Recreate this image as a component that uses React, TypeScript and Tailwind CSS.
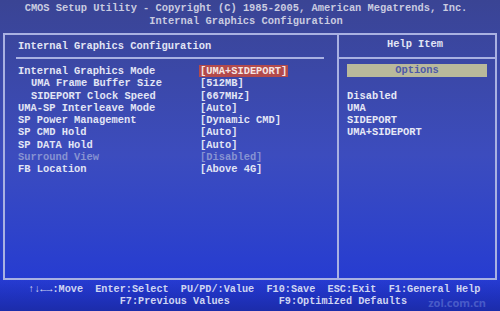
const FONT = { fontFamily: '"Liberation Mono", "DejaVu Sans Mono", monospace' };

type Row = { label: string; value: string; indent?: boolean; disabled?: boolean; selected?: boolean };

const rows: Row[] = [
  { label: 'Internal Graphics Mode', value: '[UMA+SIDEPORT]', selected: true },
  { label: 'UMA Frame Buffer Size', value: '[512MB]', indent: true },
  { label: 'SIDEPORT Clock Speed', value: '[667MHz]', indent: true },
  { label: 'UMA-SP Interleave Mode', value: '[Auto]' },
  { label: 'SP Power Management', value: '[Dynamic CMD]' },
  { label: 'SP CMD Hold', value: '[Auto]' },
  { label: 'SP DATA Hold', value: '[Auto]' },
  { label: 'Surround View', value: '[Disabled]', disabled: true },
  { label: 'FB Location', value: '[Above 4G]' },
];

const options = ['Disabled', 'UMA', 'SIDEPORT', 'UMA+SIDEPORT'];

export default function App() {
  return (
    <div
      className="relative w-[500px] h-[311px] overflow-hidden flex flex-col bg-gradient-to-b from-[#3a4494] via-[#3c4cbe] to-[#2136d6] font-bold text-[10.4px]"
      style={FONT}
    >
      {/* title bar */}
      <div className="h-[33px] pt-[2px] flex flex-col items-center pr-[8px] text-[#c9cbe0] leading-[13px] whitespace-pre">
        <div>CMOS Setup Utility - Copyright (C) 1985-2005, American Megatrends, Inc.</div>
        <div>Internal Graphics Configuration</div>
      </div>

      {/* main frame */}
      <div className="mx-[3px] h-[247px] border-2 border-[#a9b1e2] flex">
        <div className="w-[334px] border-r-2 border-[#a9b1e2] pl-[11px] pt-[5px]">
          <div className="h-[13px] leading-[13px] text-[#e2e5f5] pl-[2px]">Internal Graphics Configuration</div>
          <div className="mt-[4px] mr-[13px] h-[2px] bg-[#a9b1e2]" />
          <div className="mt-[6px] flex flex-col">
            {rows.map(r => (
              <div key={r.label} className="h-[12.3px] leading-[12.3px] flex whitespace-pre">
                <div
                  className={
                    'w-[184px] ' +
                    (r.indent ? 'pl-[15px] ' : 'pl-[2px] ') +
                    (r.disabled ? 'text-[#8793d2]' : 'text-[#e2e5f5]')
                  }
                >
                  {r.label}
                </div>
                {r.selected ? (
                  <div className="bg-[#b24a4c] text-[#f5e6e4] px-[1px] -ml-[1px]">{r.value}</div>
                ) : (
                  <div className={r.disabled ? 'text-[#8793d2]' : 'text-[#e2e5f5]'}>{r.value}</div>
                )}
              </div>
            ))}
          </div>
        </div>

        <div className="flex-1 flex flex-col pt-[3px]">
          <div className="h-[13px] leading-[13px] text-center text-[#e2e5f5] pr-[4px]">Help Item</div>
          <div className="mt-[6px] h-[2px] bg-[#a9b1e2]" />
          <div className="mt-[5px] mx-[8px] h-[13px] leading-[13px] bg-[#b9b99b] text-center text-[#4d5aa8]">Options</div>
          <div className="mt-[13px] pl-[8px] flex flex-col text-[#e6e8f6]">
            {options.map(o => (
              <div key={o} className="h-[12px] leading-[12px]">{o}</div>
            ))}
          </div>
        </div>
      </div>

      {/* key help */}
      <div className="flex-1 pt-[4px] pl-[28px] text-[#cfd5f2] text-[10.2px] leading-[12px] whitespace-pre bg-gradient-to-b from-transparent to-[#1c2caa]">
        <div>↑↓←→:Move  Enter:Select  PU/PD/:Value  F10:Save  ESC:Exit  F1:General Help</div>
        <div>{'               F7:Previous Values        F9:Optimized Defaults'}</div>
      </div>

      {/* watermark */}
      <div
        className="absolute right-[14px] bottom-[3px] text-[11px] leading-[10px] font-bold text-[#8fa2e8]/40"
        style={{ fontFamily: '"Noto Sans", sans-serif' }}
      >
        zol.com.cn
      </div>
    </div>
  );
}
